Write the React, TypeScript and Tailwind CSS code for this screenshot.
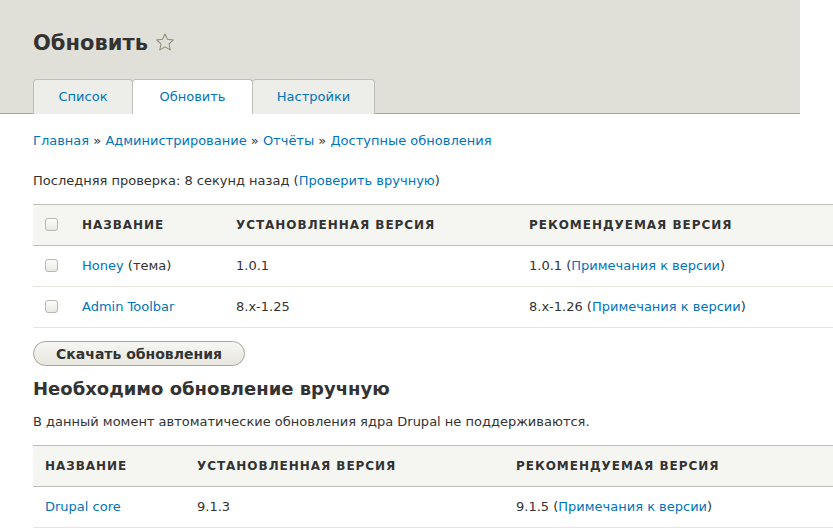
import React from 'react';

const font = { fontFamily: '"DejaVu Sans", Verdana, sans-serif' };

const Checkbox: React.FC = () => (
    <span className="inline-block w-[13px] h-[13px] rounded-[3px] border border-[#b8b8b0] bg-gradient-to-b from-[#fcfcfa] to-[#e8e8e4] align-middle" />
);

const Link: React.FC<{ children: React.ReactNode }> = ({ children }) => (
    <a href="#" className="text-[#0074bd] no-underline">{children}</a>
);

const tabs = [
    { label: 'Список', width: 'w-[100px]', active: false },
    { label: 'Обновить', width: 'w-[121px]', active: true },
    { label: 'Настройки', width: 'w-[123px]', active: false },
];

const th = 'font-bold uppercase text-[12px] tracking-[0.08em] text-[#333]';

const App: React.FC = () => {
    return (
        <div style={font} className="w-[833px] h-[528px] overflow-hidden bg-white text-[13px] text-[#333]">
            {/* header */}
            <div className="w-[800px] bg-[#e0e0d8] border-b border-[#a6a6a0] pt-[30px] px-[33px]">
                <h1 className="flex items-center gap-[6px] h-[26px] text-[21px] font-bold text-[#333] leading-[26px]">
                    Обновить
                    <svg width="22" height="21" viewBox="0 0 24 24" className="mt-[-1px]">
                        <path
                            d="M12 2.2l2.9 6.2 6.7.7-5 4.6 1.4 6.7L12 17l-6 3.4 1.4-6.7-5-4.6 6.7-.7z"
                            fill="none"
                            stroke="#8c8c70"
                            strokeWidth="1.2"
                            strokeLinejoin="round"
                        />
                    </svg>
                </h1>
                <div className="flex mt-[23px] mb-[-1px]">
                    {tabs.map((t, i) => (
                        <div
                            key={t.label}
                            className={`${t.width} h-[35px] flex items-center justify-center rounded-t-[4px] border border-b-0 border-[#bfbfba] ${i > 0 ? '-ml-px' : ''} ${t.active ? 'bg-white z-10' : 'bg-[#ededea]'}`}
                        >
                            <span className="text-[#0074bd] pb-[1px]">{t.label}</span>
                        </div>
                    ))}
                </div>
            </div>

            <div className="px-[33px]">
                <div className="mt-[17px] h-[20px] leading-[20px]">
                    <Link>Главная</Link> » <Link>Администрирование</Link> » <Link>Отчёты</Link> » <Link>Доступные обновления</Link>
                </div>
                <div className="mt-[20px] h-[20px] leading-[20px]">
                    Последняя проверка: 8 секунд назад (<Link>Проверить вручную</Link>)
                </div>

                <table className="mt-[13px] w-[900px] border-collapse border-t border-[#bfbfba] text-left">
                    <thead>
                        <tr className="h-[41px] bg-[#f5f5f2] border-b border-[#bfbfba]">
                            <th className="w-[49px] pl-[12px] pb-[3px]"><Checkbox /></th>
                            <th className={`w-[154px] ${th}`}>Название</th>
                            <th className={`w-[293px] ${th}`}>Установленная версия</th>
                            <th className={th}>Рекомендуемая версия</th>
                        </tr>
                    </thead>
                    <tbody>
                        <tr className="h-[41px] border-b border-[#e6e4df]">
                            <td className="pl-[12px] pb-[3px]"><Checkbox /></td>
                            <td><Link>Honey</Link> (тема)</td>
                            <td>1.0.1</td>
                            <td>1.0.1 (<Link>Примечания к версии</Link>)</td>
                        </tr>
                        <tr className="h-[41px] border-b border-[#e6e4df]">
                            <td className="pl-[12px] pb-[3px]"><Checkbox /></td>
                            <td><Link>Admin Toolbar</Link></td>
                            <td>8.x-1.25</td>
                            <td>8.x-1.26 (<Link>Примечания к версии</Link>)</td>
                        </tr>
                    </tbody>
                </table>

                <button className="block mt-[13px] w-[212px] h-[25px] rounded-full border border-[#a6a6a0] bg-gradient-to-b from-[#f6f6f3] to-[#e7e7df] font-bold text-[14px] text-[#333] leading-[22px]">
                    Скачать обновления
                </button>

                <h2 className="mt-[10px] text-[18px] font-bold leading-[26px] text-[#333]">Необходимо обновление вручную</h2>
                <p className="mt-[10px] h-[20px] leading-[20px]">В данный момент автоматические обновления ядра Drupal не поддерживаются.</p>

                <table className="mt-[13px] w-[900px] border-collapse border-t border-[#bfbfba] text-left">
                    <thead>
                        <tr className="h-[41px] bg-[#f5f5f2] border-b border-[#bfbfba]">
                            <th className={`w-[164px] pl-[12px] ${th}`}>Название</th>
                            <th className={`w-[319px] ${th}`}>Установленная версия</th>
                            <th className={th}>Рекомендуемая версия</th>
                        </tr>
                    </thead>
                    <tbody>
                        <tr className="h-[41px] border-b border-[#e6e4df]">
                            <td className="pl-[12px]"><Link>Drupal core</Link></td>
                            <td>9.1.3</td>
                            <td>9.1.5 (<Link>Примечания к версии</Link>)</td>
                        </tr>
                    </tbody>
                </table>
            </div>
        </div>
    );
};

export default App;
